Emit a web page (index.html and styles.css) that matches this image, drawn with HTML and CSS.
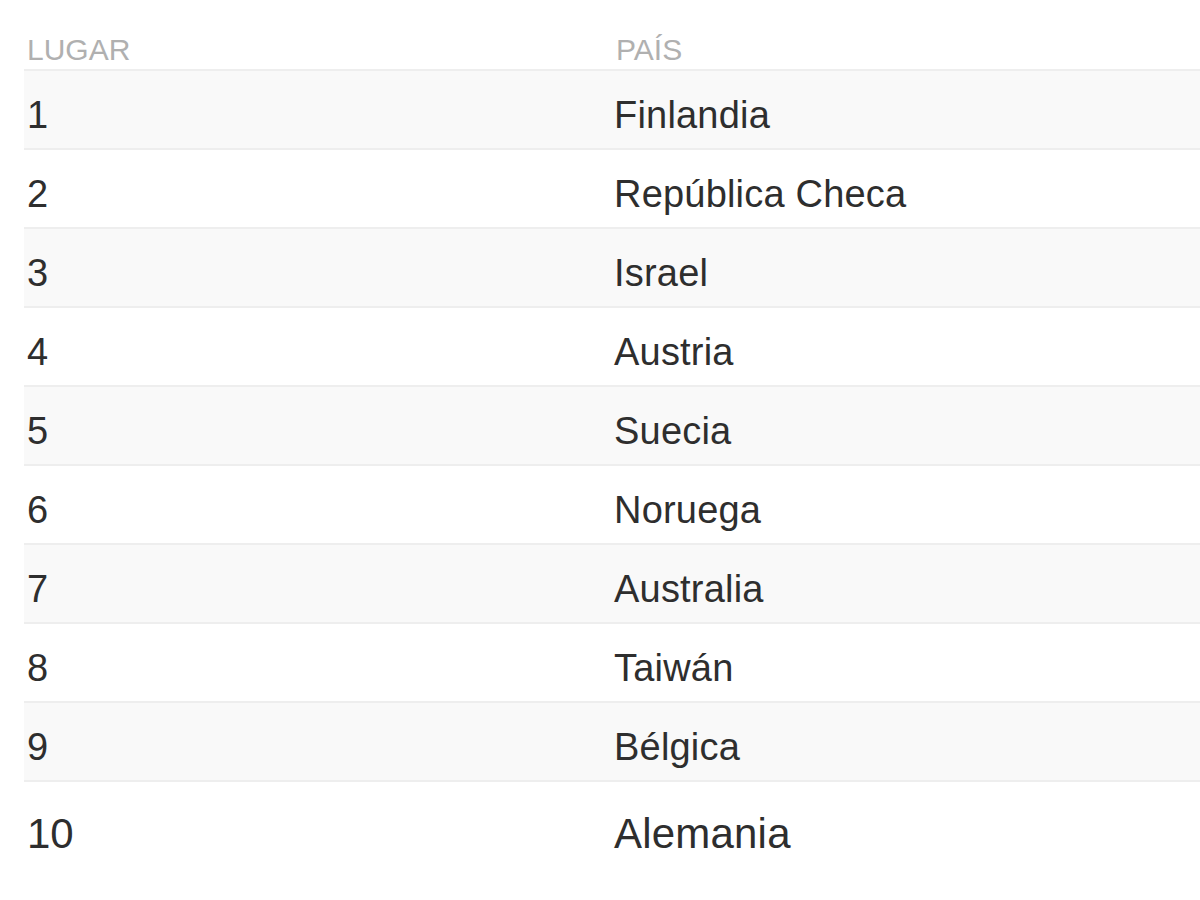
FILE: index.html
```html
<!DOCTYPE html>
<html lang="es">
<head>
<meta charset="utf-8">
<title>Ranking</title>
<link rel="stylesheet" href="styles.css">
</head>
<body>
<table class="ranking">
  <thead>
    <tr class="head-row">
      <th class="col-place">LUGAR</th>
      <th class="col-country">PAÍS</th>
    </tr>
  </thead>
  <tbody>
    <tr class="row odd"><td class="col-place">1</td><td class="col-country">Finlandia</td></tr>
    <tr class="row"><td class="col-place">2</td><td class="col-country">República Checa</td></tr>
    <tr class="row odd"><td class="col-place">3</td><td class="col-country">Israel</td></tr>
    <tr class="row"><td class="col-place">4</td><td class="col-country">Austria</td></tr>
    <tr class="row odd"><td class="col-place">5</td><td class="col-country">Suecia</td></tr>
    <tr class="row"><td class="col-place">6</td><td class="col-country">Noruega</td></tr>
    <tr class="row odd"><td class="col-place">7</td><td class="col-country">Australia</td></tr>
    <tr class="row"><td class="col-place">8</td><td class="col-country">Taiwán</td></tr>
    <tr class="row odd"><td class="col-place">9</td><td class="col-country">Bélgica</td></tr>
    <tr class="row last"><td class="col-place">10</td><td class="col-country">Alemania</td></tr>
  </tbody>
</table>
</body>
</html>
```
FILE: styles.css
```css
html, body {
  margin: 0;
  padding: 0;
  background: #ffffff;
}

body {
  font-family: "Liberation Sans", Arial, Helvetica, sans-serif;
  color: #2e2e2e;
  overflow: hidden;
}

.ranking {
  margin-left: 24px;
  width: 1200px;
  border-collapse: collapse;
  border-spacing: 0;
  table-layout: fixed;
}

.col-place {
  width: 586px;
  padding-left: 3px;
  text-align: left;
}

.col-country {
  text-align: left;
}

.head-row th {
  font-weight: normal;
  font-size: 30px;
  line-height: 34px;
  color: #b0b0b0;
  padding-top: 33px;
  padding-bottom: 2px;
  height: 34px;
  vertical-align: top;
}

.head-row .col-country {
  padding-left: 2px;
}

.row td {
  border-top: 2px solid #eeeeee;
  font-size: 38px;
  line-height: 44px;
  padding-top: 22px;
  padding-bottom: 11px;
  height: 44px;
  vertical-align: top;
  color: #2e2e2e;
}

.row .col-place {
  padding-left: 3px;
}

.row .col-country {
  padding-left: 0;
}

.row .col-country {
  letter-spacing: 0.2px;
}

.row.odd td {
  background: #f9f9f9;
}

.row.last td {
  font-size: 42px;
  line-height: 48px;
  padding-top: 28px;
  padding-bottom: 18px;
  height: 48px;
}
```
